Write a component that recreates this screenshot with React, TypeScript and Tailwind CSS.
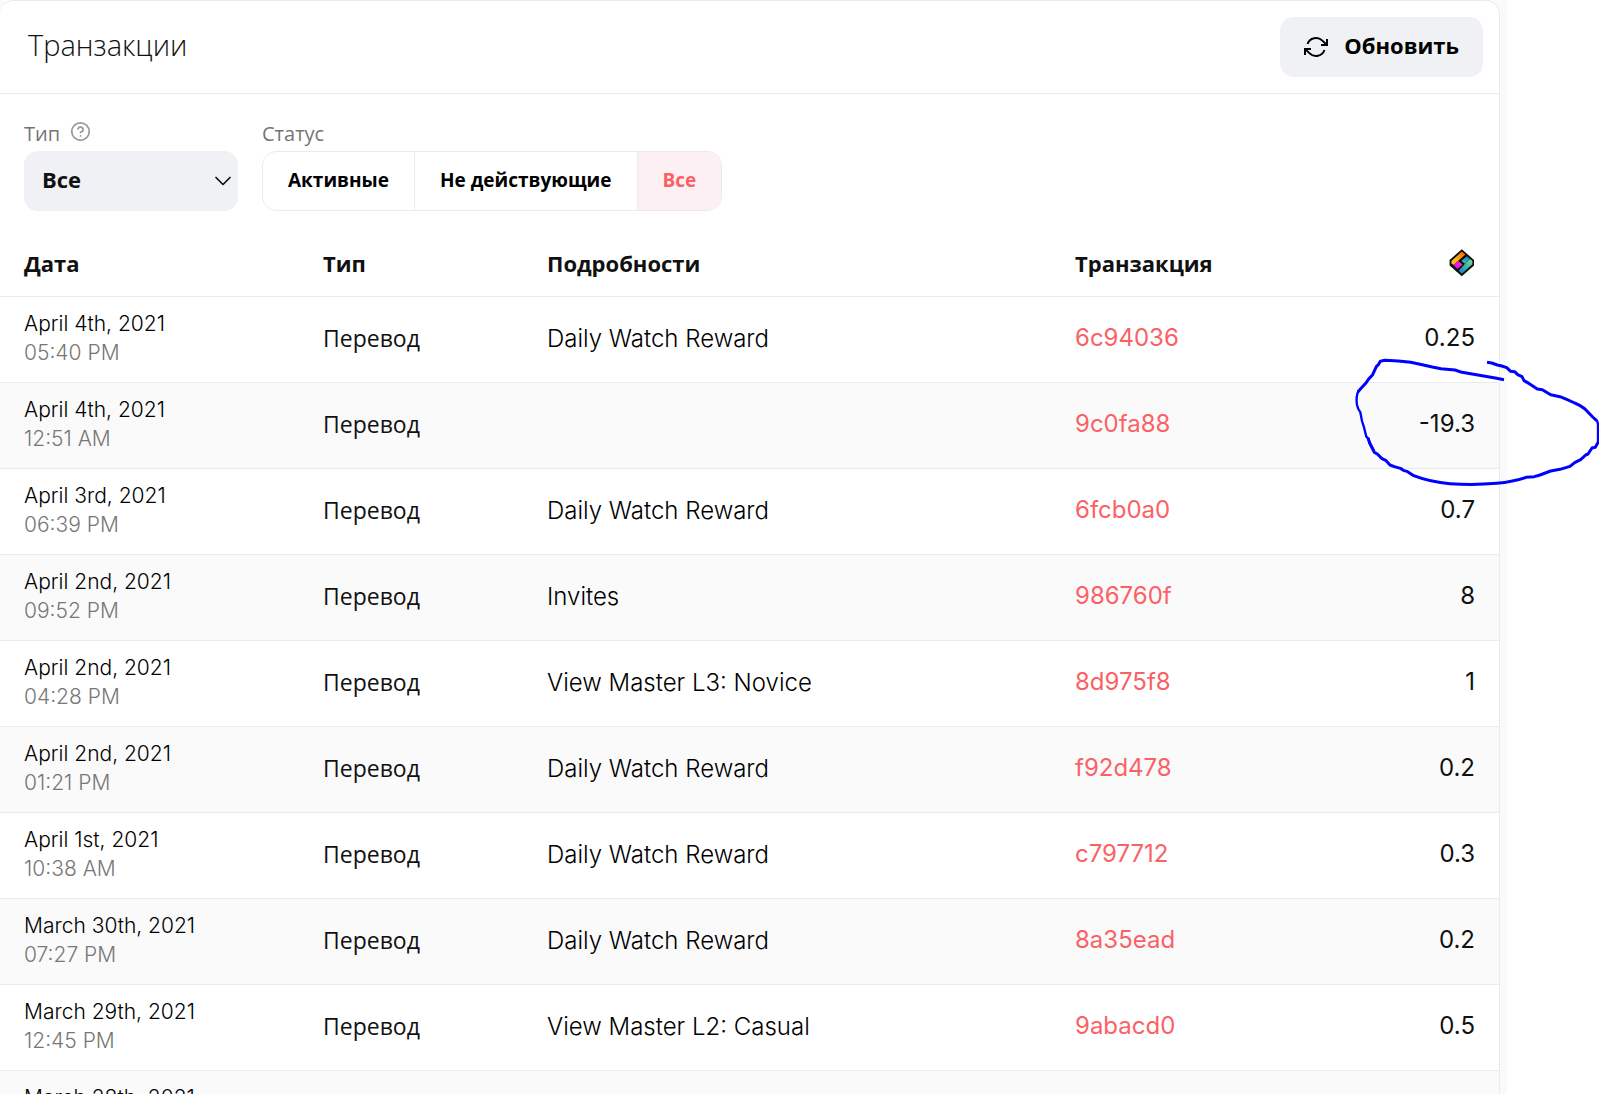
import { useState } from "react";
import { ChevronDown, CircleHelp } from "lucide-react";
import clsx from "clsx";

type Transaction = {
  hash: string;
  date: string;
  time?: string;
  type?: string;
  details?: string;
  amount?: number;
};

const transactions: Transaction[] = [
  { hash: "6c94036", date: "April 4th, 2021", time: "05:40 PM", type: "Перевод", details: "Daily Watch Reward", amount: 0.25 },
  { hash: "9c0fa88", date: "April 4th, 2021", time: "12:51 AM", type: "Перевод", details: "", amount: -19.3 },
  { hash: "6fcb0a0", date: "April 3rd, 2021", time: "06:39 PM", type: "Перевод", details: "Daily Watch Reward", amount: 0.7 },
  { hash: "986760f", date: "April 2nd, 2021", time: "09:52 PM", type: "Перевод", details: "Invites", amount: 8 },
  { hash: "8d975f8", date: "April 2nd, 2021", time: "04:28 PM", type: "Перевод", details: "View Master L3: Novice", amount: 1 },
  { hash: "f92d478", date: "April 2nd, 2021", time: "01:21 PM", type: "Перевод", details: "Daily Watch Reward", amount: 0.2 },
  { hash: "c797712", date: "April 1st, 2021", time: "10:38 AM", type: "Перевод", details: "Daily Watch Reward", amount: 0.3 },
  { hash: "8a35ead", date: "March 30th, 2021", time: "07:27 PM", type: "Перевод", details: "Daily Watch Reward", amount: 0.2 },
  { hash: "9abacd0", date: "March 29th, 2021", time: "12:45 PM", type: "Перевод", details: "View Master L2: Casual", amount: 0.5 },
  { hash: "", date: "March 28th, 2021" },
];

const statuses = ["Активные", "Не действующие", "Все"];

const RefreshIcon = () => (
  <svg className="size-6" viewBox="0 0 24 24" fill="none" stroke="currentColor" strokeWidth="2" aria-hidden="true">
    <path d="M23 4v6h-6M1 20v-6h6" />
    <path d="M3.51 9a9 9 0 0 1 14.85-3.36L23 10M1 14l4.64 4.36A9 9 0 0 0 20.49 15" />
  </svg>
);

const TokenIcon = () => (
  <svg className="ml-auto h-7 w-[26px]" viewBox="0 0 26 28" role="img" aria-label="LBC">
    <defs>
      <linearGradient id="token-warm" x1="3" y1="14" x2="15" y2="4" gradientUnits="userSpaceOnUse">
        <stop offset="0.3" stopColor="#fdb813" />
        <stop offset="1" stopColor="#f7680f" />
      </linearGradient>
      <linearGradient id="token-cool" x1="11" y1="24" x2="23" y2="13" gradientUnits="userSpaceOnUse">
        <stop offset="0" stopColor="#1286c4" />
        <stop offset="1" stopColor="#6bd69a" />
      </linearGradient>
      <linearGradient id="token-teal" x1="13" y1="13" x2="19" y2="8" gradientUnits="userSpaceOnUse">
        <stop offset="0" stopColor="#48bfa6" />
        <stop offset="1" stopColor="#1286c4" />
      </linearGradient>
      <linearGradient id="token-pink" x1="5" y1="18" x2="13" y2="14" gradientUnits="userSpaceOnUse">
        <stop offset="0.5" stopColor="#f40df0" />
        <stop offset="1" stopColor="#f24a78" />
      </linearGradient>
    </defs>
    <path d="M12.8 0.2 25 11v5.4L12.8 27.2 0.6 16.4V11z" fill="#0b0b0b" />
    <path d="M12.8 2.6 16.4 5.6 9 12 4.6 16 2.4 14.4V12z" fill="url(#token-warm)" />
    <path d="M4.6 16 9.2 12 13.6 15.4 8.4 20z" fill="url(#token-pink)" />
    <path d="M12.4 12 17.8 7.2 21.2 10 16 14.8z" fill="url(#token-teal)" />
    <path d="M16 14.8 21.2 10 23.4 12v3.2L12.8 24.8 9.6 21.8z" fill="url(#token-cool)" />
  </svg>
);

// Hand-drawn pen mark around the negative amount
const PenMark = () => (
  <svg
    className="pointer-events-none absolute top-[340px] right-0 h-40 w-[259px]"
    viewBox="0 0 777 480"
    fill="none"
    stroke="#0000ff"
    strokeWidth="9"
    strokeLinejoin="round"
    aria-hidden="true"
  >
    <path d="M492 119 L470 115 L366 97 L345 90 L303 86 L277 81 L240 73 L212 67 L175 63 L135 61 L121 64 L115 74 L109 80 L98 104 L86 117 L77 130 L64 144 L54 155" strokeWidth="9" />
    <path d="M56 152 Q47 168 51 195 Q54 208 61 217 L66 243 L72 262 L79 290 L85 296 L89 309 L101 331" strokeWidth="7" />
    <path d="M84 294 L89 309 L98 327 L103 337 L112 342 L126 356 L137 361 L150 375 L163 380 L181 385 L190 391 L203 395 L221 407 Q270 426 330 431 Q400 436 470 430 Q520 425 558 412 L583 410 L600 405 L632 393 L660 388 L690 379 L704 368 L722 359 L737 345 L744 342 L756 324 L766 322 L775 306" />
    <path d="M774 311 L774 255 Q773 245 770 240" strokeWidth="7" />
    <path d="M770 242 L758 231 L735 207 Q720 195 704 189 L680 178 L660 170 L632 164 L607 149 L592 147 L568 131 L552 122 L546 110 L533 104 L524 95 L512 94 L500 83 Q485 77 472 75 L455 69 L441 67" />
  </svg>
);

export default function App() {
  const [status, setStatus] = useState("Все");

  return (
    <div className="relative h-screen overflow-hidden bg-white font-[Inter,'Open_Sans',sans-serif] text-[#111]">
      <div className="mr-23 bg-[#fafafa] pr-[7px]">
        <section className="overflow-hidden rounded-t-[14px] border-t border-r border-[#ebebeb] bg-white">
          <header className="flex items-center justify-between border-b border-[#ebebeb] py-4 pr-4 pl-7">
            <h1 className="pb-1 font-['Open_Sans',sans-serif] text-[29px] leading-10 font-light">Транзакции</h1>
            <button
              type="button"
              className="flex h-15 items-center gap-4 rounded-[14px] bg-[#eff1f4] px-6 font-['Open_Sans',sans-serif] text-[22px] font-bold text-black"
            >
              <RefreshIcon />
              <span className="pb-1">Обновить</span>
            </button>
          </header>

          <div className="flex gap-6 px-6 pt-6 pb-6 font-['Open_Sans',sans-serif]">
            <div>
              <div className="flex h-[33px] items-center gap-2.5 pb-0.5 text-xl text-[#757575]">
                <label htmlFor="type">Тип</label>
                <CircleHelp className="mb-1 size-[21px] text-[#999]" />
              </div>
              <div className="relative">
                <select
                  id="type"
                  className="h-15 w-[214px] appearance-none rounded-[14px] bg-[#eff1f4] pb-1 pl-[18px] text-[22px] font-bold"
                >
                  <option>Все</option>
                </select>
                <ChevronDown className="pointer-events-none absolute top-4 right-px size-7 stroke-[1.5]" />
              </div>
            </div>

            <fieldset>
              <legend className="flex h-[33px] items-center pb-0.5 text-xl text-[#757575]">Статус</legend>
              <div className="flex h-15 overflow-hidden rounded-[14px] border border-[#ebebeb]">
                {statuses.map((name) => (
                  <button
                    key={name}
                    type="button"
                    onClick={() => setStatus(name)}
                    className={clsx(
                      "border-r border-[#ebebeb] px-[25px] pb-0.5 text-[19px] font-bold last:border-r-0",
                      name === status ? "bg-[#fdf0f4] text-[#fa6165]" : "text-black"
                    )}
                  >
                    {name}
                  </button>
                ))}
              </div>
            </fieldset>
          </div>

          <table className="w-full table-fixed text-left">
            <thead className="font-['Open_Sans',sans-serif] text-[22px]">
              <tr className="h-[61px] border-b border-[#ebebeb]">
                <th className="w-[299px] pb-1 pl-6">Дата</th>
                <th className="w-56 pb-1 pl-6">Тип</th>
                <th className="w-132 pb-1 pl-6">Подробности</th>
                <th className="pb-1 pl-6">Транзакция</th>
                <th className="pr-6 pb-1">
                  <TokenIcon />
                </th>
              </tr>
            </thead>
            <tbody className="text-2xl">
              {transactions.map((tx) => (
                <tr key={tx.hash} className="h-[86px] border-b border-[#ebebeb] even:bg-[#fafafa]">
                  <td className="pb-0.5 pl-6 text-[21px] leading-[29px] font-light">
                    <div className="text-black">{tx.date}</div>
                    <div className="h-[29px] text-[#777]">{tx.time}</div>
                  </td>
                  <td className="pb-0.5 pl-6 font-['Open_Sans',sans-serif] text-[23px]">{tx.type}</td>
                  <td className="pl-6 font-light text-black">{tx.details}</td>
                  <td className="pb-0.5 pl-6">
                    <a href={"#" + tx.hash} className="text-[#fa6165]">
                      {tx.hash}
                    </a>
                  </td>
                  <td className="pr-6 pb-0.5 text-right">{tx.amount}</td>
                </tr>
              ))}
            </tbody>
          </table>
        </section>
      </div>
      <PenMark />
    </div>
  );
}
